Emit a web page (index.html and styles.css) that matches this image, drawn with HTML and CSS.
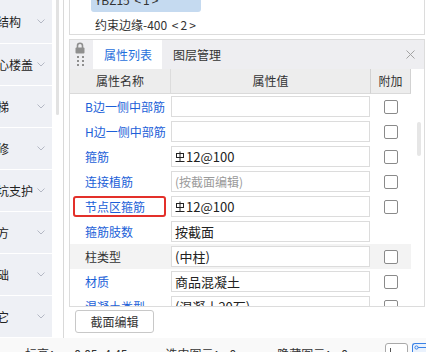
FILE: index.html
```html
<!DOCTYPE html>
<html lang="zh-CN">
<head>
  <meta charset="UTF-8" />
  <title>属性列表</title>
  <link rel="stylesheet" href="styles.css">
</head>
<body>
  <div class="app">
    <aside class="modules">
      <div class="module"><span class="module-name">墙结构</span><svg class="chev" width="8" height="5" viewBox="0 0 8 5"><polyline points="0.5,0.5 4,4 7.5,0.5" /></svg></div>
      <div class="module"><span class="module-name">空心楼盖</span><svg class="chev" width="8" height="5" viewBox="0 0 8 5"><polyline points="0.5,0.5 4,4 7.5,0.5" /></svg></div>
      <div class="module"><span class="module-name">楼梯</span><svg class="chev" width="8" height="5" viewBox="0 0 8 5"><polyline points="0.5,0.5 4,4 7.5,0.5" /></svg></div>
      <div class="module"><span class="module-name">装修</span><svg class="chev" width="8" height="5" viewBox="0 0 8 5"><polyline points="0.5,0.5 4,4 7.5,0.5" /></svg></div>
      <div class="module"><span class="module-name">基坑支护</span><svg class="chev" width="8" height="5" viewBox="0 0 8 5"><polyline points="0.5,0.5 4,4 7.5,0.5" /></svg></div>
      <div class="module"><span class="module-name">土方</span><svg class="chev" width="8" height="5" viewBox="0 0 8 5"><polyline points="0.5,0.5 4,4 7.5,0.5" /></svg></div>
      <div class="module"><span class="module-name">基础</span><svg class="chev" width="8" height="5" viewBox="0 0 8 5"><polyline points="0.5,0.5 4,4 7.5,0.5" /></svg></div>
      <div class="module"><span class="module-name">其它</span><svg class="chev" width="8" height="5" viewBox="0 0 8 5"><polyline points="0.5,0.5 4,4 7.5,0.5" /></svg></div>
    </aside>

    <div class="gutter"><div class="gutter-thumb"></div></div>

    <main class="workspace">
      <div class="list-panel">
        <ul class="comp-list">
          <li class="comp selected">YBZ15 <span class="count">&lt;1&gt;</span></li>
          <li class="comp">约束边缘-400 <span class="count">&lt;2&gt;</span></li>
        </ul>
      </div>

      <section class="props">
        <div class="props-bar">
          <div class="grip">
            <svg width="10" height="12" viewBox="0 0 10 12">
              <path class="lock-loop" d="M2.5 6V3.8a2.5 2.5 0 0 1 5 0V6" />
              <rect class="lock-body" x="0.5" y="5.5" width="9" height="6" rx="1" />
            </svg>
            <svg width="7" height="10" viewBox="0 0 7 10">
              <rect class="dot" x="0" y="0" width="2" height="2" />
              <rect class="dot" x="5" y="0" width="2" height="2" />
              <rect class="dot" x="0" y="4" width="2" height="2" />
              <rect class="dot" x="5" y="4" width="2" height="2" />
              <rect class="dot" x="0" y="8" width="2" height="2" />
              <rect class="dot" x="5" y="8" width="2" height="2" />
            </svg>
          </div>
          <div class="tab active">属性列表</div>
          <div class="tab">图层管理</div>
          <svg class="close" width="9" height="9" viewBox="0 0 9 9"><path d="M0.5 0.5L8.5 8.5M8.5 0.5L0.5 8.5" /></svg>
        </div>

        <div class="prop-head">
          <div class="head-cell">属性名称</div>
          <div class="head-cell">属性值</div>
          <div class="head-cell">附加</div>
          <div class="head-blank"></div>
        </div>

        <div class="prop-body">
          <div class="prop-rows">
            <div class="prop-row">
              <div class="prop-name">B边一侧中部筋</div>
              <div class="prop-value"></div>
              <div class="prop-check"></div>
            </div>
            <div class="prop-row">
              <div class="prop-name">H边一侧中部筋</div>
              <div class="prop-value"></div>
              <div class="prop-check"></div>
            </div>
            <div class="prop-row">
              <div class="prop-name">箍筋</div>
              <div class="prop-value"><svg class="rebar" width="10" height="12" viewBox="0 0 10 12"><rect x="1.5" y="2.5" width="7" height="4" /><path d="M5 0.5V10.5M0.5 10.5H9.5" /></svg>12@100</div>
              <div class="prop-check"></div>
            </div>
            <div class="prop-row">
              <div class="prop-name">连接植筋</div>
              <div class="prop-value muted">(按截面编辑)</div>
              <div class="prop-check"></div>
            </div>
            <div class="prop-row">
              <div class="prop-name marked"><span class="mark">节点区箍筋</span></div>
              <div class="prop-value"><svg class="rebar" width="10" height="12" viewBox="0 0 10 12"><rect x="1.5" y="2.5" width="7" height="4" /><path d="M5 0.5V10.5M0.5 10.5H9.5" /></svg>12@100</div>
              <div class="prop-check"></div>
            </div>
            <div class="prop-row">
              <div class="prop-name">箍筋肢数</div>
              <div class="prop-value">按截面</div>
              <div></div>
            </div>
            <div class="prop-row shaded">
              <div class="prop-name plain">柱类型</div>
              <div class="prop-value">(中柱)</div>
              <div class="prop-check"></div>
            </div>
            <div class="prop-row">
              <div class="prop-name">材质</div>
              <div class="prop-value">商品混凝土</div>
              <div class="prop-check"></div>
            </div>
            <div class="prop-row">
              <div class="prop-name">混凝土类型</div>
              <div class="prop-value">(混凝土20石)</div>
              <div class="prop-check"></div>
            </div>
          </div>
          <div class="prop-track"><div class="prop-thumb"></div></div>
        </div>
      </section>

      <div class="actions">
        <button class="btn">截面编辑</button>
      </div>
    </main>
  </div>

  <footer class="status">
    <span class="stat first">标高：</span>
    <span class="stat level">-0.05~4.45</span>
    <span class="stat picked">选中图元：</span>
    <span class="stat num">0</span>
    <span class="stat hidden-count">隐藏图元：</span>
    <span class="stat num">0</span>
    <span class="tool-btn"><svg width="21" height="18" viewBox="0 0 21 18"><path d="M4.5 4V18" /></svg></span>
    <span class="tool-btn on"><svg width="14" height="18" viewBox="0 0 14 18"><circle cx="3.5" cy="3.5" r="1.6" /><path d="M5 3.5H14" /></svg></span>
  </footer>
</body>
</html>
```

FILE: styles.css
```css
body {
  margin: 0;
  width: 426px;
  height: 352px;
  overflow: hidden;
  font-family: "Noto Sans CJK SC", "Noto Sans", sans-serif;
  font-size: 12px;
  color: #333;
  background: #fff;
}
.app {
  display: flex;
  height: 338px;
}

/* module list on the left */
.modules {
  width: 52px;
  background: #eef0f5;
  overflow: hidden;
  display: flex;
  flex-direction: column;
}
.module {
  flex: none;
  height: 41px;
  border-bottom: 1px solid #fff;
  display: flex;
  align-items: center;
  justify-content: space-between;
  padding-right: 7px;
  overflow: hidden;
}
.module:first-child {
  height: 43px;
}
.module-name {
  margin-left: -15px;
  white-space: nowrap;
  color: #222;
}
.chev {
  flex: none;
}
.chev polyline {
  fill: none;
  stroke: #b4b8c4;
  stroke-width: 1;
}
.gutter {
  width: 11px;
}
.gutter-thumb {
  margin-left: 4px;
  width: 3px;
  height: 115px;
  background: #e2e2e2;
  border-radius: 0 0 2px 2px;
}

/* right side */
.workspace {
  width: 357px;
  border-left: 1px solid #d9d9d9;
  padding-left: 5px;
  display: flex;
  flex-direction: column;
}
.list-panel {
  width: 354px;
  height: 35px;
  border: 1px solid #dcdcdc;
  border-top: none;
  overflow: hidden;
}
.comp-list {
  list-style: none;
  margin: -12px 0 0;
  padding: 0 0 0 21px;
}
.comp {
  width: 106px;
  height: 24px;
  line-height: 24px;
  padding-left: 4px;
  margin-bottom: 1px;
  border-radius: 3px;
  white-space: nowrap;
}
.comp.selected {
  background: #c5daf0;
}
.count {
  margin-left: 2px;
  letter-spacing: 2px;
}

.props {
  margin-top: 4px;
  width: 354px;
  height: 266px;
  border: 1px solid #dcdcdc;
  display: flex;
  flex-direction: column;
}
.props-bar {
  flex: none;
  height: 29px;
  background: #eeeef1;
  display: flex;
  align-items: stretch;
}
.grip {
  width: 18px;
  padding-left: 5px;
  padding-top: 2px;
  display: flex;
  flex-direction: column;
  gap: 2px;
}
.grip svg:last-child {
  margin-left: 2px;
}
.lock-loop {
  fill: none;
  stroke: #8f8f8f;
  stroke-width: 1.6;
}
.lock-body,
.dot {
  fill: #8f8f8f;
}
.tab {
  padding: 0 10px 0 11px;
  line-height: 29px;
  white-space: nowrap;
}
.tab.active {
  background: #fff;
  color: #1f6fdc;
}
.close {
  margin: 10px 9px 0 auto;
}
.close path {
  stroke: #a3a3a3;
  stroke-width: 1;
}

.prop-head {
  flex: none;
  display: grid;
  grid-template-columns: 101px 200px 40px 13px;
  height: 25px;
}
.head-cell {
  background: #ededed;
  border-right: 1px solid #d2d2d2;
  border-bottom: 1px solid #dadada;
  text-align: center;
  line-height: 24px;
  box-sizing: border-box;
}
.head-cell:first-child {
  border-right-color: #dcdcdc;
}

.prop-body {
  display: flex;
  height: 212px;
  overflow: hidden;
}
.prop-rows {
  width: 341px;
}
.prop-row {
  display: grid;
  grid-template-columns: 101px 200px 40px;
  height: 25px;
  align-items: center;
}
.prop-row.shaded {
  background: #f3f3f3;
}
.prop-name {
  padding-left: 15px;
  color: #1c5fd8;
  white-space: nowrap;
}
.prop-name.plain {
  color: #333;
}
.prop-name.marked {
  padding-left: 3px;
}
.mark {
  display: block;
  width: 93px;
  height: 21px;
  box-sizing: border-box;
  border: 2px solid #e3302a;
  border-radius: 3px;
  padding-left: 10px;
  line-height: 17px;
}
.prop-value {
  height: 21px;
  margin-right: 1px;
  box-sizing: border-box;
  border: 1px solid #dcdcdc;
  background: #fff;
  padding-left: 3px;
  display: flex;
  align-items: center;
  white-space: nowrap;
  overflow: hidden;
  font-size: 13px;
  color: #222;
}
.prop-value.muted {
  color: #9a9a9a;
  font-size: 12px;
}
.rebar {
  flex: none;
  margin-right: 1px;
}
.rebar rect,
.rebar path {
  fill: none;
  stroke: #222;
  stroke-width: 1;
}
.prop-check {
  justify-self: center;
  width: 14px;
  height: 14px;
  box-sizing: border-box;
  border: 1px solid #8a8a8a;
  border-radius: 2px;
  background: #fff;
}
.prop-track {
  width: 13px;
}
.prop-thumb {
  margin: 28px 0 0 6px;
  width: 4px;
  height: 34px;
  background: #e6e6e6;
  border-radius: 2px;
}

.actions {
  height: 31px;
  padding: 3px 0 0 6px;
  box-sizing: border-box;
}
.btn {
  width: 79px;
  height: 23px;
  padding: 0;
  font-family: inherit;
  font-size: 12px;
  color: #333;
  background: #fff;
  border: 1px solid #c8c8c8;
  border-radius: 3px;
}

/* status bar */
.status {
  height: 14px;
  display: flex;
  align-items: flex-start;
  background: #f9f9f9;
  overflow: hidden;
  white-space: nowrap;
}
.stat {
  margin-top: 9px;
  line-height: 14px;
}
.stat.first {
  margin-left: 25px;
}
.stat.level {
  margin-left: 9px;
}
.stat.picked {
  margin-left: 38px;
}
.stat.num {
  margin-left: 4px;
}
.stat.hidden-count {
  margin-left: 41px;
}
.tool-btn {
  margin: 5px 0 0 auto;
  width: 23px;
  height: 20px;
  box-sizing: border-box;
  border: 1px solid #a9a9a9;
  border-radius: 3px;
  background: #fff;
}
.tool-btn + .tool-btn {
  margin-left: 4px;
  width: 14px;
  border-color: #3a82e6;
  border-right: none;
  border-radius: 3px 0 0 3px;
  background: #eaf2fd;
}
.tool-btn svg {
  display: block;
  fill: none;
  stroke: #555;
  stroke-width: 1;
}
.tool-btn.on svg {
  stroke: #3a82e6;
}
```
